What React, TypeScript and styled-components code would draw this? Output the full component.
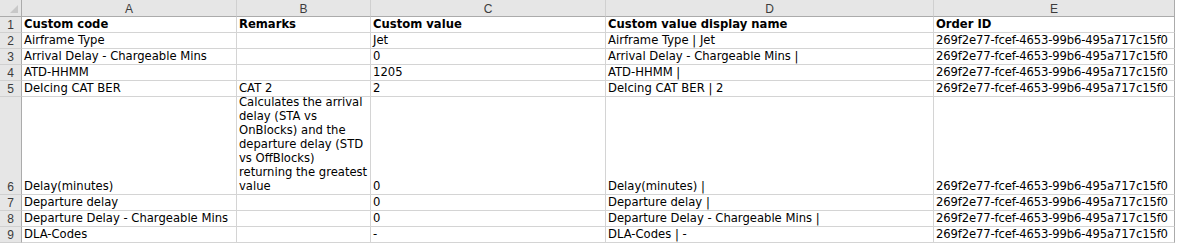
import { Fragment } from "react";
import styled, { createGlobalStyle } from "styled-components";

const GlobalStyle = createGlobalStyle`
  html, body {
    margin: 0;
    padding: 0;
    background: #ffffff;
  }
`;

const COLS = [22, 215, 134, 235, 328, 241];
const ROW_HEIGHTS = [16, 16, 16, 16, 16, 98, 16, 16, 16];

const Sheet = styled.div`
  display: grid;
  grid-template-columns: ${COLS.map((c) => `${c}px`).join(" ")};
  grid-template-rows: 17px ${ROW_HEIGHTS.map((h) => `${h}px`).join(" ")};
  width: max-content;
  font-family: "DejaVu Sans", Verdana, sans-serif;
`;

const Corner = styled.div`
  position: relative;
  background: #e6e6e6;
  border-right: 1px solid #ababab;
  border-bottom: 1px solid #ababab;
  box-sizing: border-box;

  &::after {
    content: "";
    position: absolute;
    right: 3px;
    bottom: 3px;
    width: 0;
    height: 0;
    border-left: 8px solid transparent;
    border-bottom: 8px solid #c8c8c8;
  }
`;

const ColHead = styled.div<{ $last?: boolean }>`
  background: #e6e6e6;
  border-right: 1px solid ${({ $last }) => ($last ? "#ababab" : "#d0d0d0")};
  border-bottom: 1px solid #ababab;
  box-sizing: border-box;
  display: flex;
  align-items: center;
  justify-content: center;
  font-family: "Liberation Sans", Arial, sans-serif;
  font-size: 12px;
  color: #3c3c3c;
  padding-top: 1px;
`;

const RowHead = styled.div`
  background: #e6e6e6;
  border-right: 1px solid #ababab;
  border-bottom: 1px solid #d0d0d0;
  box-sizing: border-box;
  display: flex;
  align-items: flex-end;
  justify-content: center;
  font-family: "Liberation Sans", Arial, sans-serif;
  font-size: 12px;
  color: #3c3c3c;
  line-height: 14px;
`;

const Cell = styled.div<{ $bold?: boolean; $last?: boolean }>`
  border-right: 1px solid ${({ $last }) => ($last ? "#ababab" : "#d4d4d4")};
  border-bottom: 1px solid #d4d4d4;
  box-sizing: border-box;
  display: flex;
  flex-direction: column;
  justify-content: flex-end;
  padding: 0 0 1px 2px;
  font-size: 11.6px;
  line-height: 14px;
  font-weight: ${({ $bold }) => ($bold ? 700 : 400)};
  letter-spacing: ${({ $last, $bold }) => ($last && !$bold ? "-0.12px" : "0")};
  color: #000000;
  white-space: nowrap;
  overflow: visible;
`;

const Line = styled.span`
  display: block;
`;

const ORDER = "269f2e77-fcef-4653-99b6-495a717c15f0";

const rows: (string | string[])[][] = [
  ["Custom code", "Remarks", "Custom value", "Custom value display name", "Order ID"],
  ["Airframe Type", "", "Jet", "Airframe Type | Jet", ORDER],
  ["Arrival Delay - Chargeable Mins", "", "0", "Arrival Delay - Chargeable Mins |", ORDER],
  ["ATD-HHMM", "", "1205", "ATD-HHMM |", ORDER],
  ["DeIcing CAT BER", "CAT 2", "2", "DeIcing CAT BER | 2", ORDER],
  [
    "Delay(minutes)",
    [
      "Calculates the arrival",
      "delay (STA vs",
      "OnBlocks) and the",
      "departure delay (STD",
      "vs OffBlocks)",
      "returning the greatest",
      "value",
    ],
    "0",
    "Delay(minutes) |",
    ORDER,
  ],
  ["Departure delay", "", "0", "Departure delay |", ORDER],
  ["Departure Delay - Chargeable Mins", "", "0", "Departure Delay - Chargeable Mins |", ORDER],
  ["DLA-Codes", "", "-", "DLA-Codes | -", ORDER],
];

export default function App() {
  return (
    <>
      <GlobalStyle />
      <Sheet>
        <Corner />
        {["A", "B", "C", "D", "E"].map((l, i) => (
          <ColHead key={l} $last={i === 4}>
            {l}
          </ColHead>
        ))}
        {rows.map((row, r) => (
          <Fragment key={r}>
            <RowHead>{r + 1}</RowHead>
            {row.map((v, c) => (
              <Cell key={c} $bold={r === 0} $last={c === 4}>
                {Array.isArray(v) ? v.map((t) => <Line key={t}>{t}</Line>) : v}
              </Cell>
            ))}
          </Fragment>
        ))}
      </Sheet>
    </>
  );
}
